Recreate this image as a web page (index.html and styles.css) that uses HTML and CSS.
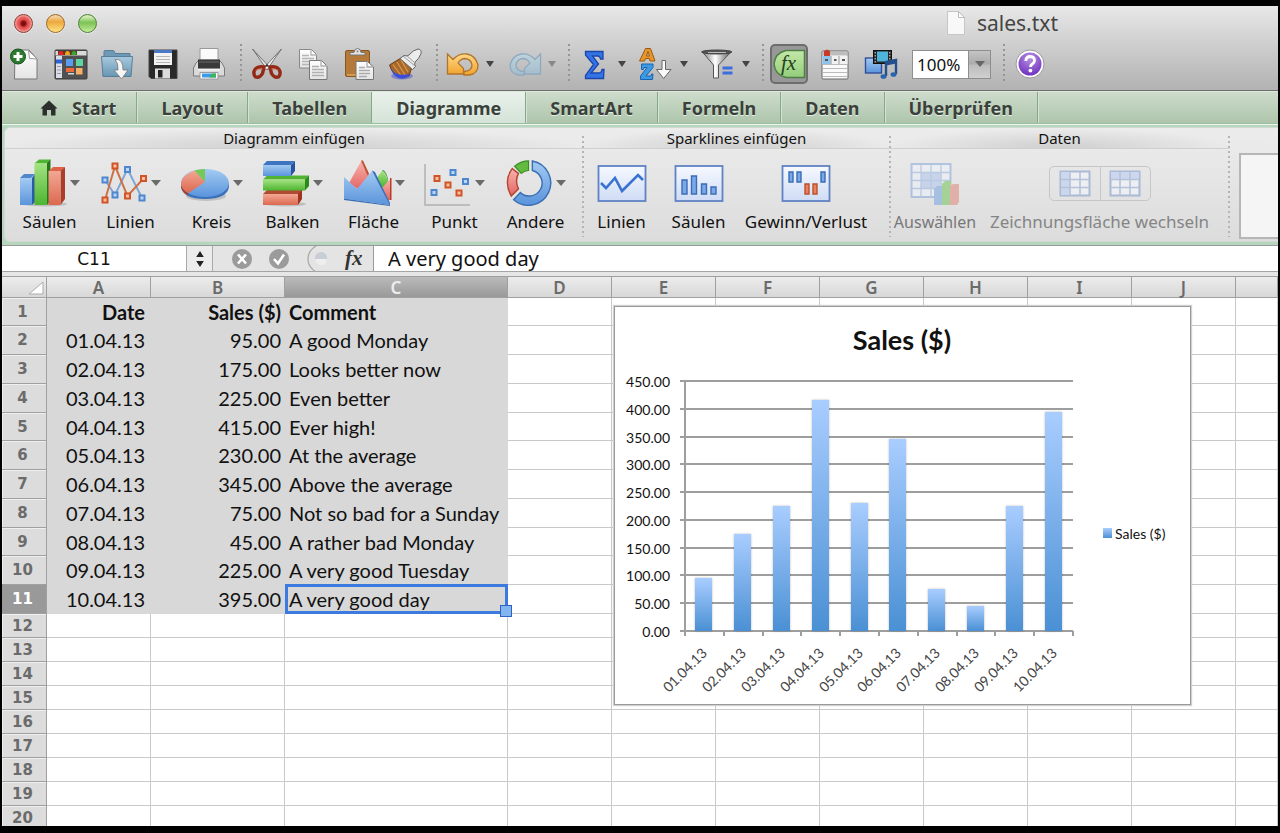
FILE: index.html
```html
<!DOCTYPE html>
<html lang="de">
<head>
<meta charset="utf-8">
<title>sales.txt</title>
<link rel="stylesheet" href="styles.css">
</head>
<body>
<svg class="defs" aria-hidden="true">
  <defs>
    <linearGradient id="gPaper" x1="0" y1="0" x2="0" y2="1"><stop offset="0" stop-color="#fff"/><stop offset="1" stop-color="#e4e4e4"/></linearGradient>
    <linearGradient id="gFolder" x1="0" y1="0" x2="0" y2="1"><stop offset="0" stop-color="#a9cade"/><stop offset="1" stop-color="#6796b4"/></linearGradient>
    <linearGradient id="gGold" x1="0" y1="0" x2="0" y2="1"><stop offset="0" stop-color="#ffd98a"/><stop offset="1" stop-color="#f0a32c"/></linearGradient>
    <linearGradient id="gSky" x1="0" y1="0" x2="0" y2="1"><stop offset="0" stop-color="#bfd3de"/><stop offset="1" stop-color="#a3bccb"/></linearGradient>
    <linearGradient id="gSteel" x1="0" y1="0" x2="1" y2="0"><stop offset="0" stop-color="#777"/><stop offset=".45" stop-color="#fff"/><stop offset="1" stop-color="#555"/></linearGradient>
    <linearGradient id="gGreen" x1="0" y1="0" x2="0" y2="1"><stop offset="0" stop-color="#a5e383"/><stop offset="1" stop-color="#4db531"/></linearGradient>
    <linearGradient id="gPale" x1="0" y1="0" x2="0" y2="1"><stop offset="0" stop-color="#c4e8a8"/><stop offset="1" stop-color="#93cd7a"/></linearGradient>
    <linearGradient id="gBlue" x1="0" y1="0" x2="0" y2="1"><stop offset="0" stop-color="#a3cbf2"/><stop offset="1" stop-color="#5a94dc"/></linearGradient>
    <linearGradient id="gRed" x1="0" y1="0" x2="0" y2="1"><stop offset="0" stop-color="#f2a894"/><stop offset="1" stop-color="#dd6850"/></linearGradient>
    <linearGradient id="gRose" x1="0" y1="0" x2="0" y2="1"><stop offset="0" stop-color="#f8b4ae"/><stop offset="1" stop-color="#e36464"/></linearGradient>
    <linearGradient id="gSpark" x1="0" y1="0" x2="0" y2="1"><stop offset="0" stop-color="#f6f9ff"/><stop offset="1" stop-color="#cfdcf5"/></linearGradient>
    <linearGradient id="gBar" x1="0" y1="0" x2="0" y2="1"><stop offset="0" stop-color="#a9cdff"/><stop offset="1" stop-color="#4a90d4"/></linearGradient>
    <radialGradient id="gHelp" cx=".5" cy=".25" r=".8"><stop offset="0" stop-color="#b892e0"/><stop offset="1" stop-color="#6b2bbd"/></radialGradient>
  </defs>
</svg>
<div class="window">
  <header class="chrome">
    <div class="titlebar">
      <div class="lights">
        <button class="light light-red" aria-label="Schließen"></button>
        <button class="light light-yellow" aria-label="Minimieren"></button>
        <button class="light light-green" aria-label="Zoomen"></button>
      </div>
      <div class="doc-title">
        <svg width="18" height="24" viewBox="0 0 18 24"><path d="M.5.5h11l6 6v17H.5z" fill="#f8f8f8" stroke="#c6c6c6"/><path d="M11.500.5v6h6z" fill="#fff" stroke="#bbb"/></svg>
        <span>sales.txt</span>
      </div>
    </div>
    <div class="toolbar">
      <button class="tool" aria-label="Neu"><svg width="34" height="34" viewBox="0 0 34 34"><path d="M7 3h14l8 9v20H6.500z" fill="url(#gPaper)" stroke="#777"/><path d="M20.500 3.500l1 8 7.500.5z" fill="#fff" stroke="#999"/><circle cx="10" cy="9.500" r="7.500" fill="#2b7a2e" stroke="#12521a"/><path d="M10 5v9M5.500 9.500h9" stroke="#fff" stroke-width="3"/></svg></button>
      <button class="tool" aria-label="Vorlagen"><svg width="34" height="34" viewBox="0 0 34 34"><rect x="1" y="3" width="32" height="29" rx="1" fill="#505050" stroke="#3a3a3a"/><path d="M1.500 4h31v4.500h-31z" fill="#d9d9d9"/><path d="M4 4h19v4H4z" fill="#5c3a22"/><path d="M4.500 8q0-4 2.500-4t2.500 4z" fill="#e22"/><path d="M11 8q0-4 2.500-4T16 8z" fill="#f0a51e"/><path d="M17.500 8q0-4 2.500-4t2.500 4z" fill="#3aa62c"/><path d="M2 9h6v22H2z" fill="#d8dde8"/><path d="M2 12.500h6v4H2z" fill="#2c62d4"/><path d="M3 19.500h4M3 23h4M3 26.500h4" stroke="#999"/><rect x="12" y="12" width="7" height="7" fill="#5a9cf0"/><rect x="22" y="12" width="7" height="7" fill="#5fd3a0"/><path d="M12 21h8v4h-8z" fill="#ee6a3a"/><path d="M14 26h6v1.500h-6z" fill="#d9d9d9"/><rect x="22" y="21" width="6.500" height="6.500" fill="#f3b066"/></svg></button>
      <button class="tool" aria-label="Öffnen"><svg width="34" height="34" viewBox="0 0 34 34"><path d="M4 7V4.500q0-1 1-1h8q1 0 1.500 1.500l.5 1.500h15V10H4z" fill="#6e9ab6" stroke="#557f9b"/><path d="M1.500 9.500h31L31 29.500H3z" fill="url(#gFolder)" stroke="#577f99"/><path d="M15 12.500q4-1 6.500 2.500 1.500 3 1.500 8h5L21.500 32 14 23h4q.5-7-3-10.500z" fill="#f6f6f6" stroke="#777" stroke-width=".8"/></svg></button>
      <button class="tool" aria-label="Sichern"><svg width="34" height="34" viewBox="0 0 34 34"><path d="M3 3h28v28.500H5L3 29.500z" fill="#292929" stroke="#444"/><path d="M8 3h18v15H8z" fill="#f2f2f2"/><path d="M8 3h18v3H8z" fill="#4a78c4"/><path d="M10 9.500h14M10 12.500h14M10 15.500h14" stroke="#b5b5b5" stroke-width="1.200"/><path d="M9 21.500h15v10H9z" fill="#dcdcdc"/><path d="M12 23h4.500v7.500H12z" fill="#222"/></svg></button>
      <button class="tool" aria-label="Drucken"><svg width="34" height="34" viewBox="0 0 34 34"><path d="M4 16l3-3h20l3 3 2.500 5v8h-31v-8z" fill="#dadada" stroke="#7a7a7a"/><path d="M8 1.500h18V13H8z" fill="#fafafa" stroke="#9a9a9a"/><path d="M6 12.500h22v9H6z" fill="#3a3a3a"/><path d="M7 15h20" stroke="#6b6b6b"/><path d="M6 22h22v1.500H6z" fill="#f4f4f4"/><path d="M8 25.500h18v6.500H8z" fill="#fff" stroke="#999"/><path d="M10 26.500h14v4H10z" fill="#3d9ae8"/><path d="M17 30.500l3-4h4v4z" fill="#3cb55a"/></svg></button>
      <span class="sep"></span>
      <button class="tool" aria-label="Ausschneiden"><svg width="34" height="34" viewBox="0 0 34 34"><path d="M2.500 2l15 16 3 4-4 .5Q12 15 2.500 2z" fill="#e4e4e4" stroke="#666" stroke-width=".9"/><path d="M31.500 2l-15 16-3 4 4 .5Q22 15 31.500 2z" fill="#f2f2f2" stroke="#666" stroke-width=".9"/><circle cx="17" cy="18.500" r="1.200" fill="#333"/><path d="M14 20q-6-1-9 2.500-2.500 4 .5 7.500 4 1.500 7-3.500zM20 20q6-1 9 2.500 2.500 4-.5 7.500-4 1.500-7-3.500z" fill="none" stroke="#932a16" stroke-width="3.400"/><path d="M5.500 23.500q3-2.500 7-1.500M28.500 23.500q-3-2.500-7-1.500" stroke="#d3644c" fill="none"/></svg></button>
      <button class="tool" aria-label="Kopieren"><svg width="34" height="34" viewBox="0 0 34 34"><path d="M3.500 2.500h12l5 5V21h-17z" fill="url(#gPaper)" stroke="#888"/><path d="M15 2.500V8h5.500M6 8.500h7M6 11.500h12M6 14.500h12M6 17.500h8" fill="none" stroke="#b5b5b5" stroke-width="1.300"/><path d="M13.500 13.500h12l5.500 5.500v13.500H13.500z" fill="url(#gPaper)" stroke="#777"/><path d="M25 13.500V19h6M16 19.500h7M16 22.500h12M16 25.500h12M16 28.500h12" fill="none" stroke="#b0b0b0" stroke-width="1.300"/></svg></button>
      <button class="tool" aria-label="Einsetzen"><svg width="34" height="34" viewBox="0 0 34 34"><rect x="3.500" y="3.500" width="24" height="26" rx="1.500" fill="#b5793a" stroke="#86561e"/><path d="M5 28h22" stroke="#d69a50" stroke-width="2"/><path d="M8 8V5.500h4Q12.500 1.500 15.500 1.500T19 5.500h4V8z" fill="#e5e5e5" stroke="#777"/><circle cx="15.500" cy="4.500" r="1" fill="#888"/><path d="M14 14.500h11.500L31.500 20v12.500H14z" fill="url(#gPaper)" stroke="#777"/><path d="M25 14.500V20h6M17 20.500h6M17 23.500h11M17 26.500h11M17 29.500h8" fill="none" stroke="#aaa" stroke-width="1.300"/></svg></button>
      <button class="tool" aria-label="Format übertragen"><svg width="34" height="34" viewBox="0 0 34 34"><ellipse cx="14" cy="29" rx="11" ry="3.500" fill="#5560d8" opacity=".6"/><path d="M1.500 18L13 11l11 9-3 9q-5 3-10 1.500Q5 28 1.500 18z" fill="#a8682a" stroke="#6b3e14"/><path d="M5 17.500l8 11M9 15l8 13M13 13l7 12" stroke="#d69a50" stroke-width="1.200"/><path d="M1.500 18.500q3 8 10 9t10-1l-1 3q-5 3-10 1.500-6-2.500-9-12.500z" fill="#3a4ddf"/><path d="M12 11.500l4-3q3 1 5-.5 4-5 9-6 4 .5 3 4.500-1.500 5-6 8.500-1 2 .5 4.500l-3 3z" fill="#ececec" stroke="#666"/><path d="M15 9l12 10M18 8l9 8" stroke="#999"/></svg></button>
      <span class="sep"></span>
      <button class="split" aria-label="Rückgängig"><svg class="tool-icon" width="38" height="34" viewBox="0 0 38 34"><path d="M3.500 7l5.500 5.500Q15 6 23 7q9 2 11 11 0 9-9 10h-5v-3.500q8-.5 8-6.500-1-6-7-6.500-4 0-7 4.500l5.500 5.500V27H3.500z" fill="url(#gGold)" stroke="#b3742a" stroke-width="1.300"/></svg><i class="caret"></i></button>
      <button class="split" aria-label="Wiederholen"><svg class="tool-icon" width="38" height="34" viewBox="0 0 38 34"><path d="M34.500 7L29 12.500Q23 6 15 7 6 9 4 18q0 9 9 10h5v-3.500q-8-.5-8-6.500 1-6 7-6.500 4 0 7 4.500L18.500 21.500V27h16z" fill="url(#gSky)" stroke="#8faabd" stroke-width="1.300"/></svg><i class="caret caret-dim"></i></button>
      <span class="sep"></span>
      <button class="split" aria-label="Summe"><svg class="tool-icon" width="38" height="34" viewBox="0 0 38 34"><path d="M9.500 4.500H27V12h-2.500q-.5-3-3-3h-5l6 8-7.500 9h7.500q3 0 3.500-3.500H28l-.5 9H9.500V28.500l8-11L9.500 8z" fill="#3374e4" stroke="#1c45ac" stroke-width="1.300"/></svg><i class="caret"></i></button>
      <button class="split" aria-label="Sortieren"><svg class="tool-icon" width="38" height="34" viewBox="0 0 38 34"><path d="M7.500 1.500h5L17 14h-5l-.7-2.500H7.500L6.500 14h-5zM10 4.500L8.500 9h3z" fill="#e8952c" stroke="#9a5a12"/><path d="M3.500 17H15v3.500L8 29h5l.5-2h1.500l-.5 5.500H2.500V29L9 20.500H6l-.5 2h-2z" fill="#3a9be2" stroke="#1c62b4"/><path d="M24 13.500h3.500v9H33L25.700 31.500 18.500 22.500H24z" fill="#fafafa" stroke="#666"/></svg><i class="caret"></i></button>
      <button class="split" aria-label="Filter"><svg class="tool-icon" width="38" height="34" viewBox="0 0 38 34"><path d="M2 4.500L13.500 18v13h5V18L31.500 4.500z" fill="url(#gSteel)" stroke="#555"/><ellipse cx="16.700" cy="5" rx="15" ry="2" fill="#555" stroke="#444"/><path d="M8 5.500h18" stroke="#bbb"/><path d="M22.500 21h10M22.500 26h10" stroke="#3c6fdc" stroke-width="3.200"/></svg><i class="caret"></i></button>
      <span class="sep"></span>
      <button class="tool tool-on" aria-label="Formelgenerator"><svg width="34" height="34" viewBox="0 0 34 34"><path d="M14 3.500h18.500v27H14Q3 28 2 17 3 6 14 3.500z" fill="url(#gPale)" stroke="#4c7f45" stroke-width="1.500"/><text x="9" y="23" class="fx-icon">fx</text></svg></button>
      <button class="tool" aria-label="Toolbox"><svg width="34" height="34" viewBox="0 0 34 34"><rect x="4" y="4" width="26" height="28" rx="1" fill="#fafafa" stroke="#666"/><path d="M4.500 4.500h25v4h-25z" fill="#bdbdbd"/><path d="M6 4l3-1.500L12 4v5H6z" fill="#c83a28"/><path d="M4.500 9h25v8h-25z" fill="#f1f1f1"/><path d="M4.500 9h8v8h-8z" fill="#8cc4ee"/><path d="M13 9v8M21 9v8" stroke="#999"/><path d="M7 13h3M16 13h2.500M24 13h3" stroke="#555" stroke-width="2"/><path d="M5 17.500h24M5 21.500h24M5 25.500h24M5 29.500h24" stroke="#bbb"/></svg></button>
      <button class="tool" aria-label="Medienbrowser"><svg width="34" height="34" viewBox="0 0 34 34"><rect x="1.500" y="11" width="16" height="15" fill="url(#gBlue)" stroke="#2f4f9c" stroke-width="1.400"/><rect x="9.500" y="3.500" width="18" height="13" fill="#262626" stroke="#111"/><rect x="13" y="4.500" width="11" height="10" fill="#4fb4dc"/><path d="M11.200 5v11M25.800 5v11" stroke="#ddd" stroke-dasharray="1.500 1.500"/><path d="M22 29V15l10-2v14" fill="none" stroke="#24508e" stroke-width="2.400"/><path d="M22 17l10-2" stroke="#24508e" stroke-width="3"/><ellipse cx="19.500" cy="29.500" rx="3" ry="2.300" fill="#2c64ac"/><ellipse cx="29.500" cy="27.500" rx="3" ry="2.300" fill="#2c64ac"/></svg></button>
      <div class="zoom">
        <input type="text" value="100%" aria-label="Zoomfaktor">
        <button aria-label="Zoomstufen"><i class="caret caret-zoom"></i></button>
      </div>
      <span class="sep"></span>
      <button class="tool" aria-label="Hilfe"><svg width="34" height="34" viewBox="0 0 34 34"><circle cx="17" cy="17" r="14" fill="#fff" stroke="#999"/><circle cx="17" cy="17" r="11.500" fill="url(#gHelp)"/><path d="M12.800 14q.2-4.500 4.500-4.500 4.200.3 4.200 4 0 2-2.200 3.500-1.800 1.200-1.800 3" fill="none" stroke="#fff" stroke-width="2.800"/><circle cx="17.400" cy="23.600" r="1.900" fill="#fff"/></svg></button>
    </div>
  </header>

  <nav class="tabs">
    <a href="#start" class="tab tab-home"><svg width="18" height="16" viewBox="0 0 18 16"><path d="M9 .5L17.500 8.500H15.500V15.500H11V10H7v5.500H2.500V8.500H.5z" fill="#2c2f2c"/></svg>Start</a>
    <a href="#layout" class="tab">Layout</a>
    <a href="#tabellen" class="tab">Tabellen</a>
    <a href="#diagramme" class="tab tab-active">Diagramme</a>
    <a href="#smartart" class="tab">SmartArt</a>
    <a href="#formeln" class="tab">Formeln</a>
    <a href="#daten" class="tab">Daten</a>
    <a href="#review" class="tab">Überprüfen</a>
  </nav>

  <div class="ribbon">
    <div class="ribbon-panel">
      <section class="group group-charts">
        <h2>Diagramm einfügen</h2>
        <div class="group-row">
          <button class="big"><span class="big-icon"><svg width="48" height="48" viewBox="0 0 48 48"><ellipse cx="26" cy="45" rx="22" ry="2.500" fill="#000" opacity=".15"/><path d="M1 19l4-4h11l-4 4z" fill="#4f86cc"/><path d="M13 19l3-4v28l-3 3z" fill="#2c5ba6"/><path d="M1 19h12v27H1z" fill="url(#gBlue)"/><path d="M16 4l4-3.500h12L28 4z" fill="#4fb634"/><path d="M28 4l3.500-3.500V42L28 46z" fill="#25781a"/><path d="M15.500 4H28v42H15.500z" fill="url(#gGreen)"/><path d="M30 12l4-4h12l-4 4z" fill="#dd6248"/><path d="M41.500 12L46 8v32l-4.500 6z" fill="#aa3e2a"/><path d="M29.500 12h12v34h-12z" fill="url(#gRed)"/></svg><i class="caret caret-big"></i></span>Säulen</button>
          <button class="big"><span class="big-icon"><svg width="48" height="48" viewBox="0 0 48 48"><g fill="none" stroke-width="2"><path d="M5 21l10 15L27.500 10 42 39" stroke="#7fa6d8"/><path d="M5 41L15 7l12.500 30L43.500 19.500" stroke="#cf7142"/></g><g fill="#bcd6f6" stroke="#4f87cf" stroke-width="2"><path d="M2.500 18.500h5v5h-5zM12.500 33.500h5v5h-5zM25 8h5v5h-5zM39.500 36.500h5v5h-5z"/></g><g fill="#ffc0a0" stroke="#cf5528" stroke-width="2"><path d="M2.500 38.500h5v5h-5zM12.500 4.500h5v5h-5zM25 34.500h5v5h-5zM41 17h5v5h-5z"/></g></svg><i class="caret caret-big"></i></span>Linien</button>
          <button class="big"><span class="big-icon"><svg width="50" height="48" viewBox="0 0 50 48"><ellipse cx="26" cy="37" rx="20" ry="5" fill="#000" opacity=".15"/><path d="M1 24v4q2 12 24 12t24-12v-4z" fill="#3b71ba"/><path d="M1 24v4q1 5 7 8.500v-5z" fill="#a6412b"/><ellipse cx="25" cy="24" rx="24" ry="14" fill="url(#gBlue)"/><path d="M25 23L8.500 34Q1 30 1 24q.5-7.500 13.500-12.500z" fill="url(#gRed)"/><path d="M25 23L14.500 11.500Q19 10 25 10z" fill="#76c956"/></svg><i class="caret caret-big"></i></span>Kreis</button>
          <button class="big"><span class="big-icon"><svg width="48" height="48" viewBox="0 0 48 48"><ellipse cx="24" cy="45" rx="20" ry="2.500" fill="#000" opacity=".15"/><path d="M1 35l4-4h36l-4 4z" fill="#b04c34"/><path d="M36 35l4-4v9l-4 6z" fill="#9c3420"/><path d="M1 35h35v11H1z" fill="url(#gRed)"/><path d="M1 20.500l4-4h42l-4 4z" fill="#51b334"/><path d="M43 20.500l4-4V27l-4 4.500z" fill="#2c8a1c"/><path d="M1 20.500h42v11H1z" fill="url(#gGreen)"/><path d="M1 6l4-4h28l-4 4z" fill="#3f74c2"/><path d="M29 6l4-4v10l-4 5z" fill="#27549c"/><path d="M1 6h28v11H1z" fill="url(#gBlue)"/></svg><i class="caret caret-big"></i></span>Balken</button>
          <button class="big"><span class="big-icon"><svg width="49" height="48" viewBox="0 0 49 48"><path d="M6 24L18.500 1.500 27 17 16 31z" fill="url(#gRose)"/><path d="M18 1.500h2l6 13-1.500 2z" fill="#bf5434"/><path d="M33 20l6-8q2-1 6 10v6h-7z" fill="url(#gGreen)"/><path d="M39 12q3-1 6 10v-2q-2-8-5-9z" fill="#3a8f24"/><path d="M39 29l8.500-9.500V41H45z" fill="url(#gRose)"/><path d="M47 19h1.500v22H47z" fill="#b54028"/><path d="M1 18l13 12L29.500 11.500 46.500 46 1 39.500z" fill="url(#gBlue)"/><path d="M1 39.500l45.500 6.500L29 11.500l3 1.500 15 31v3L1 41z" fill="#386fb5"/></svg><i class="caret caret-big"></i></span>Fläche</button>
          <button class="big"><span class="big-icon"><svg width="48" height="48" viewBox="0 0 48 48"><path d="M1 5v41h45" fill="none" stroke="#b0b0b0" stroke-width="1.500"/><g fill="#bcd6f6" stroke="#4f87cf" stroke-width="2"><path d="M7.500 31h5v5h-5zM26.500 11h5v5h-5zM39 20h5v5h-5z"/></g><g fill="#ffc0a0" stroke="#cf5528" stroke-width="2"><path d="M10.500 17h5v5h-5zM21.500 23.500h5v5h-5zM32.500 31.500h5v5h-5z"/></g></svg><i class="caret caret-big"></i></span>Punkt</button>
          <button class="big"><span class="big-icon"><svg width="48" height="50" viewBox="0 0 50 50"><path d="M28.500 2A23.300 23.300 0 1 1 9 42.500l7-7.500A13.500 13.500 0 1 0 28.500 12z" fill="url(#gBlue)" stroke="#3a6fb4" stroke-width="1.500"/><path d="M6.500 38.500Q-2 23 7.500 10l6.500 5q-4 8 0 16z" fill="url(#gRose)" stroke="#b3452e" stroke-width="1.500"/><path d="M10 7.500q7-5.500 14.500-5.500v10q-4 0-7.500 3z" fill="#62bb40" stroke="#3a8f24" stroke-width="1.200"/></svg><i class="caret caret-big"></i></span>Andere</button>
        </div>
      </section>
      <section class="group group-spark">
        <h2>Sparklines einfügen</h2>
        <div class="group-row">
          <button class="big big-narrow"><span class="big-icon"><svg width="50" height="48" viewBox="0 0 50 48"><rect x="1.500" y="7" width="47" height="35" fill="url(#gSpark)" stroke="#5f82c4" stroke-width="1.800"/><path d="M4 24l5 5 9-10 7 13 16-16 5 5" fill="none" stroke="#3a72d0" stroke-width="2.600"/></svg></span>Linien</button>
          <button class="big big-narrow"><span class="big-icon"><svg width="50" height="48" viewBox="0 0 50 48"><rect x="1.500" y="7" width="47" height="35" fill="url(#gSpark)" stroke="#5f82c4" stroke-width="1.800"/><path d="M8 21h5v14H8zM17.500 17h5v18h-5zM27.500 25h5v10h-5zM37 28h5v7h-5z" fill="#78a9e8" stroke="#3c6cb4" stroke-width="1.400"/></svg></span>Säulen</button>
          <button class="big big-wide"><span class="big-icon"><svg width="50" height="48" viewBox="0 0 50 48"><rect x="1.500" y="7" width="47" height="35" fill="url(#gSpark)" stroke="#5f82c4" stroke-width="1.800"/><path d="M8 13h4v10H8zM16 13h4v10h-4zM40 13h4v10h-4z" fill="#78a9e8" stroke="#3c6cb4" stroke-width="1.400"/><path d="M24 25h4v10h-4zM32 25h4v10h-4z" fill="#e88260" stroke="#bb4f2c" stroke-width="1.400"/></svg></span>Gewinn/Verlust</button>
        </div>
      </section>
      <section class="group group-data">
        <h2>Daten</h2>
        <div class="group-row">
          <button class="big big-select" disabled><span class="big-icon"><svg width="50" height="48" viewBox="0 0 50 48"><g opacity=".5"><path d="M1.500 5h39v33h-39z" fill="#eef3fc" stroke="#7ba0d8" stroke-width="2"/><path d="M11 14h20v15H11z" fill="#a9c3ee"/><path d="M11 5v33M21 5v33M31 5v33M1.500 13.500h39M1.500 21.500h39M1.500 29.500h39" stroke="#8fafe0" stroke-width="1.300"/><path d="M24 30l3-3h6v19h-9z" fill="#6a9ee0"/><path d="M32 25l3-3h6v24h-9z" fill="#6cc24c"/><path d="M40 27l3-2h6v18l-2 3h-7z" fill="#e08070"/></g></svg></span>Auswählen</button>
          <div class="switch">
            <span class="switch-pair">
              <button disabled aria-label="Zeilen"><svg width="32" height="28" viewBox="0 0 32 28"><g opacity=".55"><path d="M1.500 1.500h29v24h-29z" fill="#f4f8ff" stroke="#7a98c8" stroke-width="2"/><path d="M2 2h9v23H2z" fill="#b9cdf4"/><path d="M11 2v24M21 2v24M2 9.500h28M2 17.500h28" stroke="#8da6d0" stroke-width="1.600"/></g></svg></button><button disabled aria-label="Spalten"><svg width="32" height="28" viewBox="0 0 32 28"><g opacity=".55"><path d="M1.500 1.500h29v24h-29z" fill="#f4f8ff" stroke="#7a98c8" stroke-width="2"/><path d="M2 2h28v7H2z" fill="#b9cdf4"/><path d="M11 2v24M21 2v24M2 9.500h28M2 17.500h28" stroke="#8da6d0" stroke-width="1.600"/></g></svg></button>
            </span>
            <span>Zeichnungsfläche wechseln</span>
          </div>
        </div>
      </section>
      <section class="group group-rest">
        <div class="gallery"></div>
      </section>
    </div>
  </div>

  <div class="formula-bar">
    <input class="name-box" type="text" value="C11" aria-label="Namenfeld">
    <button class="stepper" aria-label="Namen wählen"><svg width="8" height="16" viewBox="0 0 8 16"><path d="M4 0l3.800 6H.2zM4 16l3.800-6H.2z" fill="#222"/></svg></button>
    <div class="formula-tools">
      <button aria-label="Abbrechen"><svg width="20" height="20" viewBox="0 0 20 20"><circle cx="10" cy="10" r="10" fill="#9b9b9b"/><path d="M6 5.500l8 9M14 5.500l-8 9" stroke="#fff" stroke-width="2.600"/></svg></button>
      <button aria-label="Eingeben"><svg width="20" height="20" viewBox="0 0 20 20"><circle cx="10" cy="10" r="10" fill="#9b9b9b"/><path d="M5 10l4 4.500 6-9" fill="none" stroke="#fff" stroke-width="2.600"/></svg></button>
      <button aria-label="Formel-Generator"><svg width="22" height="26" viewBox="0 0 22 26"><path d="M10 0Q2 5 2 13t8 13" fill="none" stroke="#aaa" stroke-width="1.300"/><circle cx="15" cy="12" r="6" fill="#c9cdd4"/><path d="M9 13h12q-1 6-6 6t-6-6z" fill="#eee"/></svg></button>
      <button class="fx" aria-label="Funktion einfügen">fx</button>
    </div>
    <input class="formula" type="text" value="A very good day" aria-label="Formel">
  </div>

  <main class="sheet">
    <table class="grid">
      <colgroup><col class="c-head"><col class="c-std"><col class="c-b"><col class="c-c"><col class="c-std"><col class="c-std"><col class="c-std"><col class="c-std"><col class="c-std"><col class="c-std"><col class="c-std"><col></colgroup>
      <thead><tr><th class="corner"><svg width="15" height="13" viewBox="0 0 15 13"><path d="M14 0v12H0z" fill="#fff" stroke="#aaa"/></svg></th><th>A</th><th>B</th><th class="col-active">C</th><th>D</th><th>E</th><th>F</th><th>G</th><th>H</th><th>I</th><th>J</th><th></th></tr></thead>
      <tbody id="rows"></tbody>
    </table>
    <figure class="chart">
      <svg id="chart" width="575" height="397" viewBox="0 0 575 397" role="img" aria-label="Sales ($)"></svg>
    </figure>
  </main>
</div>
<script src="app.js"></script>
</body>
</html>
```
FILE: styles.css
```css
* { box-sizing: border-box; }

body {
  margin: 0;
  background: #000;
  color: #111;
  font-family: "Noto Sans", "Open Sans", sans-serif;
  font-size: 17px;
}

button, input { font: inherit; color: inherit; margin: 0; padding: 0; border: 0; background: none; }
button { cursor: default; }
svg { display: block; flex: none; }
h2 { margin: 0; }

.defs { position: absolute; width: 0; height: 0; }

.window {
  display: flex;
  flex-direction: column;
  height: 100vh;
  padding: 6px 2px 7px;
  overflow: hidden;
}

/* Title bar and toolbar */
.chrome {
  flex: none;
  background: linear-gradient(#e8e8e8, #cfcfcf 45%, #b2b2b2);
  border-bottom: 1px solid #6e6e6e;
}
.titlebar {
  display: flex;
  align-items: center;
  height: 34px;
  padding: 0 220px 0 12px;
}
.lights { display: flex; gap: 13px; }
.light {
  width: 19px;
  height: 19px;
  border-radius: 50%;
  border: 1px solid #8a3a34;
  box-shadow: 0 1px 1px #fff8;
}
.light-red { background: radial-gradient(circle, #7d0f10 0 2px, #e0484a 4px, #e9605c 6px, #f5b3ae 9px); }
.light-yellow { border-color: #9a6a2c; background: linear-gradient(#f4cf9a 10%, #eda83c 40%, #ffe384); }
.light-green { border-color: #4f8038; background: linear-gradient(#d0ecb4 10%, #7cc256 45%, #c5ee98); }
.doc-title {
  display: flex;
  align-items: center;
  gap: 12px;
  margin-left: auto;
  font-size: 21px;
  line-height: 28px;
  color: #444;
}
.toolbar {
  display: flex;
  align-items: center;
  gap: 8px;
  height: 50px;
  padding: 0 4px 2px;
}
.tool {
  display: flex;
  align-items: center;
  justify-content: center;
  flex: none;
  width: 38px;
  height: 38px;
}
.tool-on {
  height: 40px;
  border: 2px solid #6d6d6d;
  border-radius: 5px;
  background: #989898;
}
.split { display: flex; align-items: center; gap: 4px; flex: none; width: 50px; }
.split + .split { margin-left: 4px; }
.sep {
  flex: none;
  width: 2px;
  height: 40px;
  margin: 0 -2px 0 4px;
  background: repeating-linear-gradient(#959595 0 2px, transparent 2px 5px);
}
.caret {
  flex: none;
  width: 8px;
  border: 4px solid transparent;
  border-top: 6px solid #444;
  border-bottom: 0;
}
.caret-dim { border-top-color: #888; }
.caret-zoom { border-width: 6px 5px 0; border-top-color: #666; width: 10px; }
.caret-big { border-width: 6px 5px 0; border-top-color: #6a6a6a; width: 10px; }
.fx-icon { font: italic 21px "Liberation Serif", serif; fill: #26401f; }
.zoom {
  display: flex;
  flex: none;
  width: 79px;
  height: 29px;
  margin-left: 4px;
  border: 1px solid #8e8e8e;
  background: #fff;
}
.zoom input { width: 55px; padding-left: 4px; }
.zoom button {
  display: flex;
  align-items: center;
  justify-content: center;
  flex: 1;
  border-left: 1px solid #8e8e8e;
  background: linear-gradient(#c4c4c4, #aaa 48%, #bcbcbc 52%, #d0d0d0);
}

/* Ribbon tabs */
.tabs {
  display: flex;
  flex: none;
  height: 33px;
  border-top: 1px solid #dde8dd;
  border-bottom: 1px solid #9dbca1;
  background: linear-gradient(#cedccc, #adc5ab);
}
.tab {
  display: flex;
  align-items: center;
  justify-content: center;
  padding: 0 24px;
  border-right: 1px solid #86a88a;
  box-shadow: 1px 0 #d5e3d5;
  color: #3a403a;
  font-size: 18px;
  font-weight: 700;
  text-decoration: none;
  text-shadow: 0 1px #e6efe6;
}
.tab-home { gap: 14px; padding: 0 20px 0 38px; }
.tab-active { background: linear-gradient(#e9f1ea, #d4e3d8); }

/* Ribbon */
.ribbon {
  flex: none;
  padding: 2px 0 3px 2px;
  border-top: 1px solid #eef6ef;
  background: #b5d6bd;
}
.ribbon-panel {
  display: flex;
  height: 115px;
  border: 1px solid #d2d8d2;
  border-right: 0;
  border-radius: 6px 0 0 6px;
  background: linear-gradient(#ececec, #e6e6e6 40%, #dcdcdc);
  overflow: hidden;
}
.group { position: relative; flex: none; }
.group + .group::before {
  content: "";
  position: absolute;
  left: -1px;
  top: 8px;
  bottom: 4px;
  width: 2px;
  background: repeating-linear-gradient(#b4b4b4 0 2px, transparent 2px 5px);
}
.group h2 {
  height: 21px;
  background: radial-gradient(ellipse 50% 100% at 50% 100%, #cfcfcf, transparent);
  border-bottom: 1px solid #d0d0d0;
  font-size: 15px;
  line-height: 21px;
  font-weight: 400;
  text-align: center;
}
.group-row { display: flex; }
.group-charts { width: 578px; }
.group-charts .group-row { padding-left: 4px; }
.group-spark { width: 307px; }
.group-data { width: 339px; }
.group-rest { flex: 1; padding-top: 25px; }
.big {
  display: flex;
  flex-direction: column;
  align-items: center;
  width: 81px;
  padding-top: 8px;
  line-height: 26px;
  white-space: nowrap;
}
.big-icon { display: flex; align-items: center; gap: 3px; height: 52px; }
.big-narrow { width: 77px; }
.big-wide { width: 138px; }
.big-select { width: 90px; color: #777; font-size: 16px; }
.switch {
  display: flex;
  flex-direction: column;
  align-items: center;
  flex: 1;
  padding: 17px 10px 0 0;
  color: #858585;
  line-height: 26px;
  white-space: nowrap;
}
.switch-pair {
  display: flex;
  margin-bottom: 8px;
  border: 1px solid #c6c6c6;
  border-radius: 5px;
}
.switch-pair button { display: flex; align-items: center; justify-content: center; width: 50px; height: 33px; }
.switch-pair button + button { border-left: 1px solid #c6c6c6; }
.gallery { height: 86px; margin-left: 10px; border: 2px solid #b6b6b6; border-right: 0; background: #f5f5f5; }

/* Formula bar */
.formula-bar {
  display: flex;
  flex: none;
  height: 27px;
  border-top: 1px solid #999;
  border-bottom: 1px solid #a5a5a5;
  background: #e4e4e4;
}
.name-box { width: 184px; background: #fff; text-align: center; font-family: "DejaVu Sans", sans-serif; }
.stepper {
  display: flex;
  align-items: center;
  justify-content: center;
  width: 27px;
  border: solid #a9a9a9;
  border-width: 0 1px;
  background: #ececec;
}
.formula-tools { display: flex; align-items: center; gap: 17px; width: 160px; padding-left: 19px; }
.fx { font: italic 700 21px "Liberation Serif", serif; color: #333; }
.formula {
  flex: 1;
  min-width: 0;
  padding-left: 14px;
  border-left: 1px solid #999;
  background: #fff;
  font-size: 20px;
}

/* Worksheet */
.sheet {
  position: relative;
  flex: 1;
  min-height: 0;
  overflow: hidden;
  border-top: 4px solid #e6e6e6;
  background: #fff;
}
.grid { width: 100%; table-layout: fixed; border-collapse: separate; border-spacing: 0; }
.c-head { width: 45px; }
.c-std { width: 104px; }
.c-b { width: 134px; }
.c-c { width: 223px; }
.grid th, .grid td { padding: 0; overflow: visible; white-space: nowrap; }
.grid th {
  border: solid #a0a0a0;
  border-width: 0 1px 1px 0;
  color: #6b6b6b;
  font: 600 17px/19px "Noto Sans", sans-serif;
}
.grid thead th {
  height: 22px;
  border-top: 1px solid #a0a0a0;
  background: linear-gradient(#ececec, #d8d8d8);
}
.grid thead .col-active { background: linear-gradient(#bababa, #999); color: #eee; }
.corner svg { margin: 2px 2px 0 auto; }
.grid tbody th {
  padding-right: 3px;
  background: #dcdcdc;
  box-shadow: inset 1px 1px #efefef;
  font: 700 15px/16px "DejaVu Sans", sans-serif;
}
.grid tbody .row-active { background: #999; color: #fff; box-shadow: none; }
.grid td {
  height: 24px;
  border: solid #c9c9c9;
  border-width: 0 1px 1px 0;
  font: 20px/24px Lato, sans-serif;
}
.grid .filled td { height: 29px; }
.grid .filled:nth-child(4n+1) td { height: 28px; }
.grid .filled .sel { border-color: #d8d8d8; background: #d8d8d8; }
.grid .num { text-align: right; padding-right: 5px; }
.grid .txt { padding-left: 4px; }
.grid .num-b { padding-right: 3px; }
.grid .strong { font-weight: 700; }
.grid .cursor { position: relative; }
.cursor::before {
  content: "";
  position: absolute;
  inset: -1px -1px -1px 0;
  border: 3px solid #3c7adf;
}
.cursor::after {
  content: "";
  position: absolute;
  right: -5px;
  bottom: -4px;
  width: 10px;
  height: 10px;
  border: 1px solid #2f62c4;
  background: #82b6f0;
}

/* Chart object floating over the cells */
.chart {
  position: absolute;
  left: 612px;
  top: 30px;
  margin: 0;
  border: 1px solid #9a9a9a;
  box-shadow: 0 0 1px 1px #d0d0d0;
  background: #fff;
}
.chart text { font-family: Lato, sans-serif; font-size: 14px; fill: #111; }
.chart .title { font-size: 27px; font-weight: 700; text-anchor: middle; }
.chart .tick { text-anchor: end; }
.chart .date { text-anchor: end; fill: #444; }
.chart line { stroke: #9e9e9e; stroke-width: 2; }
.chart .bar { filter: drop-shadow(0 0 1px #0004); fill: url(#gBar); }
```
FILE: app.js
```js
const data = [
  ["01.04.13", 95, "A good Monday"],
  ["02.04.13", 175, "Looks better now"],
  ["03.04.13", 225, "Even better"],
  ["04.04.13", 415, "Ever high!"],
  ["05.04.13", 230, "At the average"],
  ["06.04.13", 345, "Above the average"],
  ["07.04.13", 75, "Not so bad for a Sunday"],
  ["08.04.13", 45, "A rather bad Monday"],
  ["09.04.13", 225, "A very good Tuesday"],
  ["10.04.13", 395, "A very good day"]
];

const blanks = n => "<td></td>".repeat(n);
let rows = `<tr class="filled"><th>1</th><td class="sel num strong">Date</td><td class="sel num num-b strong">Sales ($)</td><td class="sel txt strong">Comment</td>${blanks(8)}</tr>`;
data.forEach(([date, value, note], i) => {
  const last = i === data.length - 1;
  rows += `<tr class="filled"><th${last ? ' class="row-active"' : ""}>${i + 2}</th><td class="sel num">${date}</td>` +
    `<td class="sel num num-b">${value.toFixed(2)}</td><td class="sel txt${last ? " cursor" : ""}">${note}</td>${blanks(8)}</tr>`;
});
for (let n = 12; n <= 20; n++) rows += `<tr><th>${n}</th>${blanks(11)}</tr>`;
document.getElementById("rows").innerHTML = rows;

const left = 70, right = 458, top0 = 74, base = 324, max = 450;
const y = v => Math.round(base - (v / max) * (base - top0));
const step = (right - left) / data.length;
let out = `<text class="title" x="287" y="43">Sales ($)</text>`;
for (let v = 0; v <= max; v += 50) {
  out += `<line x1="${left - 5}" x2="${right}" y1="${y(v)}" y2="${y(v)}"/><text class="tick" x="55" y="${y(v) + 6}">${v.toFixed(2)}</text>`;
}
out += `<line x1="${left}" x2="${left}" y1="${top0}" y2="${base}"/>`;
for (let i = 0; i <= data.length; i++) {
  const x = Math.round(left + i * step);
  out += `<line x1="${x}" x2="${x}" y1="${base}" y2="${base + 5}"/>`;
}
data.forEach(([date, value], i) => {
  const x = Math.round(left + (i + 0.5) * step);
  out += `<rect class="bar" x="${x - 9}" y="${y(value)}" width="17" height="${base - y(value)}"/>` +
    `<text class="date" transform="translate(${x + 4} ${base + 23}) rotate(-45)">${date}</text>`;
});
out += `<rect x="488" y="221" width="9" height="10" fill="url(#gBar)"/><text x="500" y="232">Sales ($)</text>`;
document.getElementById("chart").innerHTML = out;
```
